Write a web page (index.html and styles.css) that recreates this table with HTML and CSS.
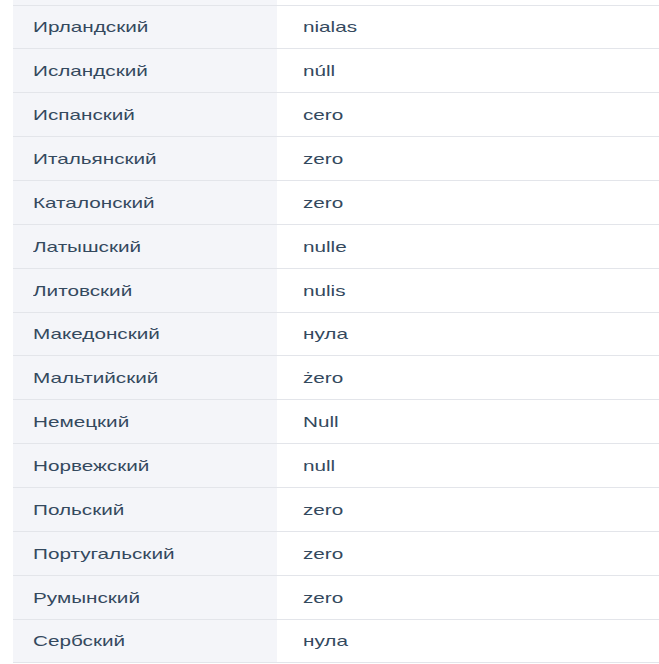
FILE: index.html
```html
<!DOCTYPE html>
<html lang="ru">
<head>
<meta charset="utf-8">
<title>Ноль на разных языках</title>
<link rel="stylesheet" href="styles.css">
</head>
<body>
<div class="table">
  <div class="row cut"><div class="lang"></div><div class="word"></div></div>
  <div class="row"><div class="lang"><span class="txt">Ирландский</span></div><div class="word"><span class="txt">nialas</span></div></div>
  <div class="row"><div class="lang"><span class="txt">Исландский</span></div><div class="word"><span class="txt">núll</span></div></div>
  <div class="row"><div class="lang"><span class="txt">Испанский</span></div><div class="word"><span class="txt">cero</span></div></div>
  <div class="row"><div class="lang"><span class="txt">Итальянский</span></div><div class="word"><span class="txt">zero</span></div></div>
  <div class="row"><div class="lang"><span class="txt">Каталонский</span></div><div class="word"><span class="txt">zero</span></div></div>
  <div class="row"><div class="lang"><span class="txt">Латышский</span></div><div class="word"><span class="txt">nulle</span></div></div>
  <div class="row"><div class="lang"><span class="txt">Литовский</span></div><div class="word"><span class="txt">nulis</span></div></div>
  <div class="row"><div class="lang"><span class="txt">Македонский</span></div><div class="word"><span class="txt">нула</span></div></div>
  <div class="row"><div class="lang"><span class="txt">Мальтийский</span></div><div class="word"><span class="txt">żero</span></div></div>
  <div class="row"><div class="lang"><span class="txt">Немецкий</span></div><div class="word"><span class="txt">Null</span></div></div>
  <div class="row"><div class="lang"><span class="txt">Норвежский</span></div><div class="word"><span class="txt">null</span></div></div>
  <div class="row"><div class="lang"><span class="txt">Польский</span></div><div class="word"><span class="txt">zero</span></div></div>
  <div class="row"><div class="lang"><span class="txt">Португальский</span></div><div class="word"><span class="txt">zero</span></div></div>
  <div class="row"><div class="lang"><span class="txt">Румынский</span></div><div class="word"><span class="txt">zero</span></div></div>
  <div class="row"><div class="lang"><span class="txt">Сербский</span></div><div class="word"><span class="txt">нула</span></div></div>
</div>
</body>
</html>
```
FILE: styles.css
```css
html, body {
  margin: 0;
  padding: 0;
  background: #ffffff;
}
body {
  font-family: "Liberation Sans", Arial, sans-serif;
  font-size: 15px;
  color: #34495e;
  overflow: hidden;
}
.table {
  margin-left: 13px;
  display: flex;
  flex-direction: column;
}
.row {
  display: grid;
  grid-template-columns: 264px 1fr;
  height: 43.86px;
  box-sizing: border-box;
  border-bottom: 1px solid #e3e5ea;
}
.row.cut {
  height: 5.5px;
}
.lang {
  background: #f4f5f9;
  padding-left: 20px;
  display: flex;
  align-items: center;
}
.word {
  background: #ffffff;
  padding-left: 26px;
  display: flex;
  align-items: center;
}
.txt {
  display: inline-block;
  white-space: nowrap;
  transform: scaleX(1.38);
  transform-origin: left center;
}
```
